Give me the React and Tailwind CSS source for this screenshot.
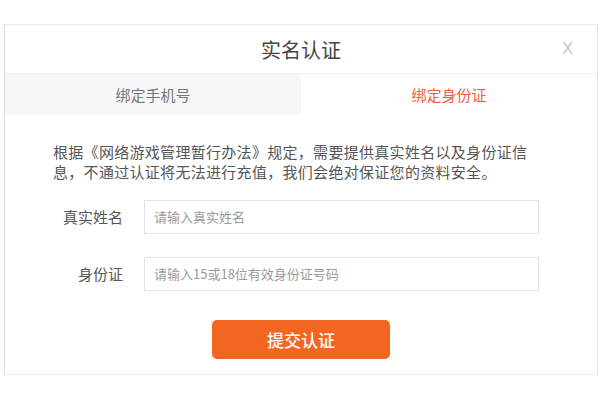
export default function App() {
  return (
    <div className="w-[600px] h-[400px] bg-white overflow-hidden pt-[24px] pl-[4px] pr-[2px] font-['Noto_Sans_CJK_SC',sans-serif]">
      <div className="h-[351px] bg-white border-l border-l-[#dcdcdc] border-t border-t-[#f6e7d9] border-r border-r-[#f8e2cf] border-b border-b-[#eeeeee] flex flex-col">
        {/* header */}
        <div className="relative h-[49px] flex items-center justify-center border-b border-[#f0f0f0]">
          <div className="text-[20px] text-[#444] leading-none pt-[2px]">实名认证</div>
          <div className="absolute right-[24px] top-[16px] text-[16px] text-[#c4c4c4] font-['Liberation_Sans',sans-serif] leading-none">
            X
          </div>
        </div>

        {/* tabs */}
        <div className="flex h-[41px]">
          <div className="w-[296px] bg-[#f6f6f6] flex items-center justify-center pt-[2px] text-[15px] text-[#777]">
            绑定手机号
          </div>
          <div className="flex-1 flex items-center justify-center pt-[2px] text-[15px] text-[#ee5f35]">
            绑定身份证
          </div>
        </div>

        {/* body */}
        <div className="pl-[48px] pt-[27px]">
          <p className="text-[15px] leading-[20px] text-[#555] tracking-[0.3px]">
            根据《网络游戏管理暂行办法》规定，需要提供真实姓名以及身份证信
            <br />
            息，不通过认证将无法进行充值，我们会绝对保证您的资料安全。
          </p>

          <div className="mt-[18px] flex items-center">
            <label className="w-[70px] text-right text-[15px] text-[#555]">真实姓名</label>
            <div className="ml-[21px] w-[395px] h-[34px] border border-[#e2e2e2] flex items-center pl-[9px] text-[13px] text-[#9a9a9a]">
              请输入真实姓名
            </div>
          </div>

          <div className="mt-[23px] flex items-center">
            <label className="w-[70px] text-right text-[15px] text-[#555]">身份证</label>
            <div className="ml-[21px] w-[395px] h-[34px] border border-[#e2e2e2] flex items-center pl-[9px] text-[13px] text-[#9a9a9a]">
              请输入15或18位有效身份证号码
            </div>
          </div>
        </div>

        <div className="mt-[29px] flex justify-center">
          <button className="w-[178px] h-[39px] rounded-[5px] bg-[#f26621] text-white text-[17px] font-medium">
            提交认证
          </button>
        </div>
      </div>
    </div>
  );
}
